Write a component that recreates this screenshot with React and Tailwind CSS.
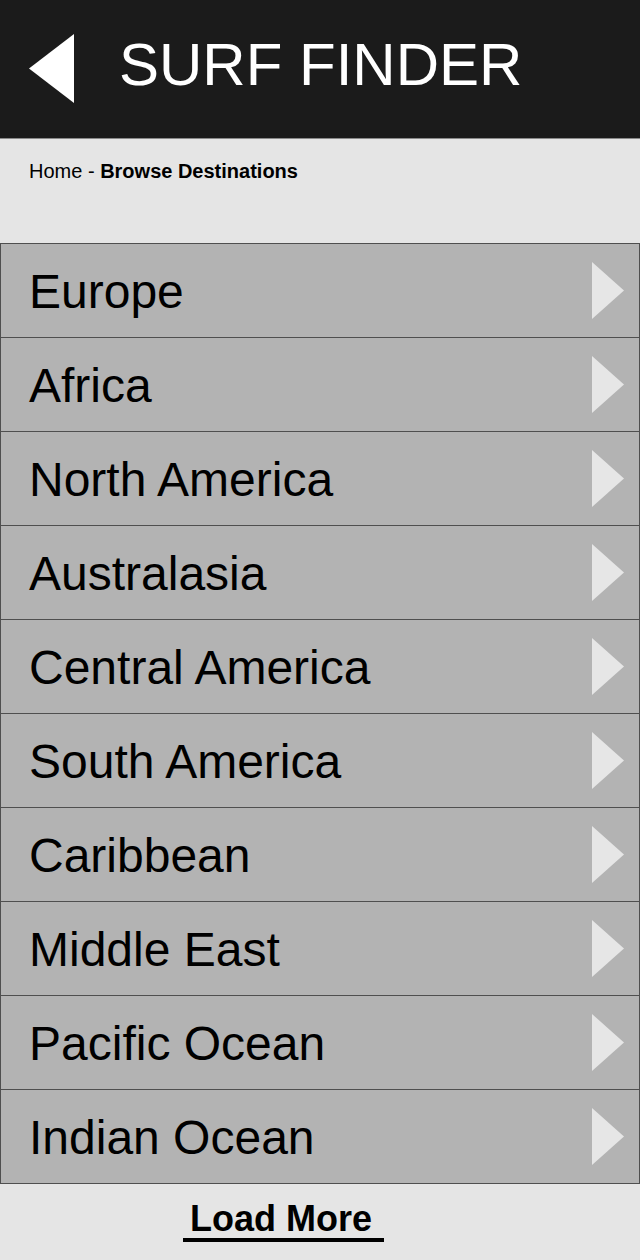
const destinations = [
  "Europe",
  "Africa",
  "North America",
  "Australasia",
  "Central America",
  "South America",
  "Caribbean",
  "Middle East",
  "Pacific Ocean",
  "Indian Ocean",
];

export default function App() {
  return (
    <div className="w-[640px] min-h-[1260px] bg-[#e5e5e5] font-['Liberation_Sans',Arial,sans-serif] text-black">
      {/* Header */}
      <header className="h-[139px] bg-[#1b1b1b] border-b border-[#8a8a8a] flex items-start pt-[34px]">
        <svg width="45" height="69" viewBox="0 0 45 69" className="ml-[29px] shrink-0">
          <polygon points="45,0 45,69 0,34.5" fill="#ffffff" />
        </svg>
        <h1 className="ml-[45px] mt-[1px] text-[60px] leading-none text-white">
          SURF FINDER
        </h1>
      </header>

      {/* Breadcrumb */}
      <div className="h-[104px] pt-[22px] pl-[29px] text-[20px] leading-none">
        Home - <span className="font-bold">Browse Destinations</span>
      </div>

      {/* Destination list */}
      <ul className="border-x border-b border-[#4f4f4f]">
        {destinations.map((name) => (
          <li
            key={name}
            className="h-[94px] border-t border-[#4f4f4f] bg-[#b3b3b3] flex items-center justify-between pl-[28px] pr-[15px]"
          >
            <span className="text-[48px] leading-none pt-[3px]">{name}</span>
            <svg width="32" height="57" viewBox="0 0 32 57" className="shrink-0">
              <polygon points="0,0 32,28.5 0,57" fill="#e6e6e6" />
            </svg>
          </li>
        ))}
      </ul>

      {/* Load more */}
      <div className="pt-[17px]">
        <button className="ml-[183px] w-[201px] pl-[7px] pb-[1px] text-left text-[36px] font-bold leading-none border-b-4 border-black">
          Load More
        </button>
      </div>
    </div>
  );
}
